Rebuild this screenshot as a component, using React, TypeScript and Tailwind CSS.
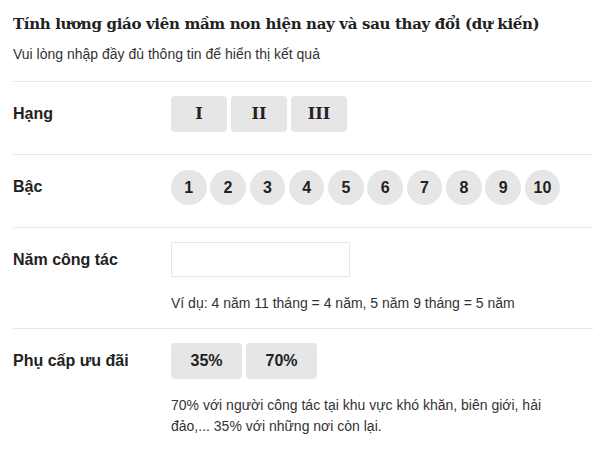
import React from "react";

const sans = { fontFamily: '"Liberation Sans", Arial, sans-serif' };

function Row({ label, children, last }: { label: string; children: React.ReactNode; last?: boolean }) {
  return (
    <div className={`flex border-t border-[#e6e6e6] pt-[14px] ${last ? "pb-[10px]" : ""}`}>
      <div className="w-[158px] shrink-0 h-[36px] flex items-center text-[16px] font-bold text-[#222]">{label}</div>
      <div className="flex-1 min-w-0">{children}</div>
    </div>
  );
}

export default function App() {
  const btn = "h-[36px] rounded-[4px] bg-[#e6e6e6] flex items-center justify-center font-bold text-[#222]";
  return (
    <div className="w-[606px] h-[450px] bg-white px-[13px] overflow-hidden" style={sans}>
      <h1
        className="pt-[14px] text-[15px] leading-[20px] font-bold tracking-[-0.33px] text-[#222] whitespace-nowrap"
        style={{ fontFamily: '"DejaVu Serif", "Liberation Serif", serif' }}
      >
        Tính lương giáo viên mầm non hiện nay và sau thay đổi (dự kiến)
      </h1>
      <p className="mt-[10px] text-[14px] leading-[20px] text-[#333]">
        Vui lòng nhập đầy đủ thông tin để hiển thị kết quả
      </p>
      <div className="mt-[17px]">
        <Row label="Hạng">
          <div className="flex gap-[4px] pb-[22px]">
            {["I", "II", "III"].map((r) => (
              <div
                key={r}
                className={`${btn} w-[56px] text-[16px]`}
                style={{ fontFamily: '"DejaVu Serif", serif' }}
              >
                {r}
              </div>
            ))}
          </div>
        </Row>
        <Row label="Bậc">
          <div className="flex gap-[3.8px] pb-[22px]">
            {[1, 2, 3, 4, 5, 6, 7, 8, 9, 10].map((n) => (
              <div
                key={n}
                className="w-[35.5px] h-[35px] mt-[1px] rounded-full bg-[#e6e6e6] flex items-center justify-center text-[16px] font-bold text-[#222]"
              >
                {n}
              </div>
            ))}
          </div>
        </Row>
        <Row label="Năm công tác">
          <input
            type="text"
            className="block w-[179px] h-[35px] border border-[#e6e6e6] bg-white outline-none"
          />
          <p className="mt-[16px] pb-[15px] text-[14px] leading-[20px] text-[#333]">
            Ví dụ: 4 năm 11 tháng = 4 năm, 5 năm 9 tháng = 5 năm
          </p>
        </Row>
        <Row label="Phụ cấp ưu đãi" last>
          <div className="flex gap-[4px]">
            {["35%", "70%"].map((p) => (
              <div key={p} className={`${btn} w-[71px] text-[16px]`}>
                {p}
              </div>
            ))}
          </div>
          <p className="mt-[16px] max-w-[400px] text-[14px] leading-[21px] text-[#333]">
            70% với người công tác tại khu vực khó khăn, biên giới, hải đảo,... 35% với những nơi còn lại.
          </p>
        </Row>
      </div>
    </div>
  );
}
